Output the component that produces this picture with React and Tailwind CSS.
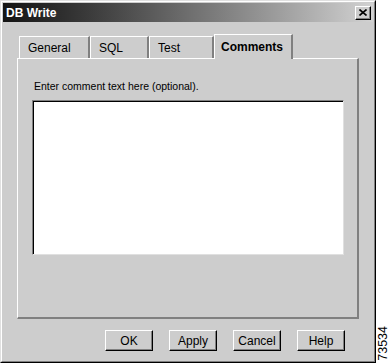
import React from 'react';

const tabs = [
  { label: 'General', w: 'w-[71px]' },
  { label: 'SQL', w: 'w-[59px]' },
  { label: 'Test', w: 'w-[65px]' },
];

const buttons = ['OK', 'Apply', 'Cancel', 'Help'];

const DialogButton = ({ children }) => (
  <button className="w-[48px] h-[21px] bg-[#cdcdcd] border border-t-white border-l-white border-r-black border-b-black shadow-[inset_-1px_-1px_0_#808080] text-[12px] text-black leading-none flex items-center justify-center">
    {children}
  </button>
);

const App = () => {
  return (
    <div className="w-[389px] h-[363px] bg-white flex font-['Liberation_Sans',Arial,sans-serif] overflow-hidden">
      {/* Dialog window */}
      <div className="w-[376px] shrink-0 h-[363px] bg-[#cdcdcd] border border-t-[#e0e0e0] border-l-[#e0e0e0] border-r-black border-b-black">
        <div className="h-full border border-t-white border-l-white border-r-[#808080] border-b-[#808080] p-px flex flex-col">
          {/* Title bar */}
          <div className="h-[19px] bg-linear-to-r from-[#141414] via-[#6e6e6e] to-[#d2d2d2] flex items-center justify-between pl-[3px] pr-[2px]">
            <span className="text-white font-bold text-[12px] leading-none">DB Write</span>
            <div className="w-[16px] h-[14px] bg-[#cdcdcd] border border-t-white border-l-white border-r-black border-b-black shadow-[inset_-1px_-1px_0_#808080] flex items-center justify-center">
              <svg width="8" height="7" viewBox="0 0 8 7">
                <path d="M0.5 0.5 L7.5 6.5 M7.5 0.5 L0.5 6.5" stroke="black" strokeWidth="1.6" fill="none" />
              </svg>
            </div>
          </div>

          {/* Tab strip */}
          <div className="mt-[12px] mx-[14px] flex items-end pl-[2px] h-[24px] relative z-10">
            {tabs.map((t) => (
              <div
                key={t.label}
                className={`${t.w} h-[22px] border-t border-l border-t-white border-l-white border-r-2 border-r-[#808080] flex items-center pl-[8px] text-[12px] text-black`}
              >
                {t.label}
              </div>
            ))}
            <div className="w-[79px] h-[25px] -mb-px bg-[#cdcdcd] border-t border-l border-t-white border-l-white border-r-2 border-r-[#808080] flex items-center pl-[6px] text-[12px] font-bold text-black">
              Comments
            </div>
          </div>

          {/* Tab panel */}
          <div className="mx-[14px] h-[261px] border border-t-white border-l-white border-r-2 border-b-2 border-r-[#808080] border-b-[#808080] pt-[21px] pl-[16px] pr-[13px]">
            <p className="text-[10.5px] leading-[12px] text-black">Enter comment text here (optional).</p>
            <div className="mt-[8px] -ml-[2px] w-[312px] h-[155px] bg-white border border-t-[#808080] border-l-[#808080] border-r-[#e0e0e0] border-b-[#e0e0e0] shadow-[inset_1px_1px_0_black]" />
          </div>

          {/* Buttons */}
          <div className="mt-[11px] flex justify-end gap-[16px] pr-[28px]">
            {buttons.map((b) => (
              <DialogButton key={b}>{b}</DialogButton>
            ))}
          </div>
        </div>
      </div>

      {/* Figure number strip */}
      <div className="flex-1 flex flex-col justify-end items-center pb-[2px]">
        <span className="[writing-mode:vertical-rl] rotate-180 text-[12.5px] leading-[12px] text-black">73534</span>
      </div>
    </div>
  );
};

export default App;
